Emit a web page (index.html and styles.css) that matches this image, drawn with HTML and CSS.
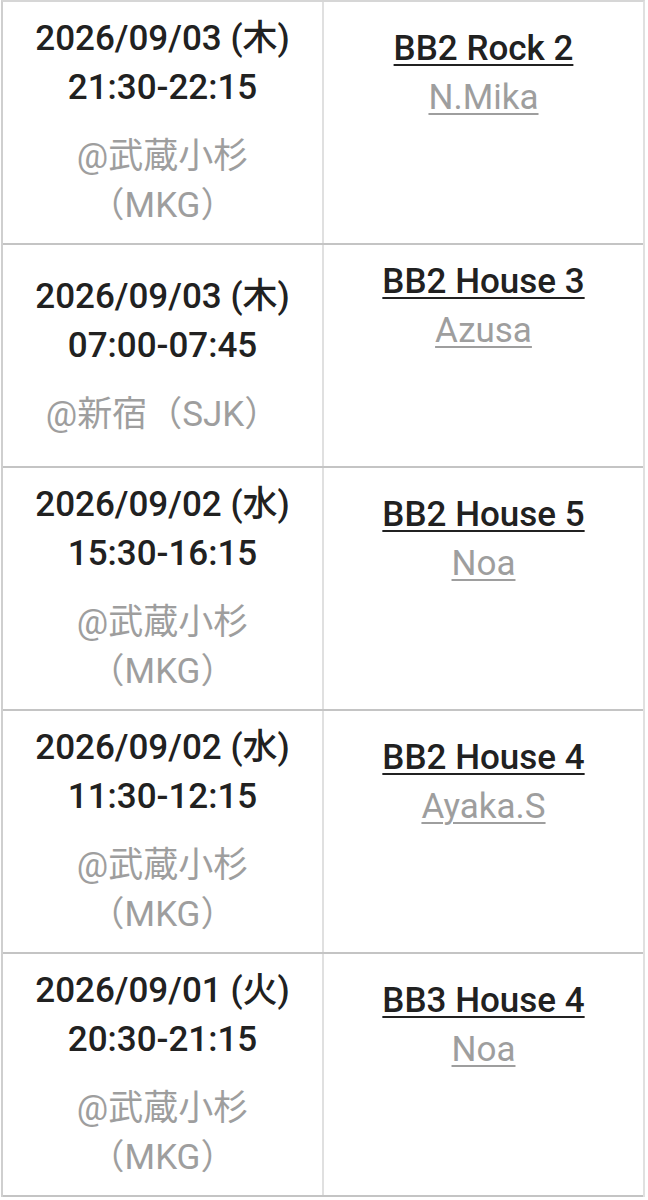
FILE: index.html
```html
<!DOCTYPE html>
<html lang="ja">
<head>
<meta charset="utf-8">
<title>Schedule</title>
<link rel="stylesheet" href="styles.css">
</head>
<body>
<div class="schedule">
  <div class="row">
    <div class="when">
      <div class="datetime">2026/09/03 (木)<br>21:30-22:15</div>
      <div class="place">@武蔵小杉（MKG）</div>
    </div>
    <div class="what">
      <div class="lesson">
        <a class="title" href="#">BB2 Rock 2</a>
        <a class="instructor" href="#">N.Mika</a>
      </div>
    </div>
  </div>
  <div class="row">
    <div class="when">
      <div class="datetime">2026/09/03 (木)<br>07:00-07:45</div>
      <div class="place">@新宿（SJK）</div>
    </div>
    <div class="what">
      <div class="lesson">
        <a class="title" href="#">BB2 House 3</a>
        <a class="instructor" href="#">Azusa</a>
      </div>
    </div>
  </div>
  <div class="row">
    <div class="when">
      <div class="datetime">2026/09/02 (水)<br>15:30-16:15</div>
      <div class="place">@武蔵小杉（MKG）</div>
    </div>
    <div class="what">
      <div class="lesson">
        <a class="title" href="#">BB2 House 5</a>
        <a class="instructor" href="#">Noa</a>
      </div>
    </div>
  </div>
  <div class="row">
    <div class="when">
      <div class="datetime">2026/09/02 (水)<br>11:30-12:15</div>
      <div class="place">@武蔵小杉（MKG）</div>
    </div>
    <div class="what">
      <div class="lesson">
        <a class="title" href="#">BB2 House 4</a>
        <a class="instructor" href="#">Ayaka.S</a>
      </div>
    </div>
  </div>
  <div class="row">
    <div class="when">
      <div class="datetime">2026/09/01 (火)<br>20:30-21:15</div>
      <div class="place">@武蔵小杉（MKG）</div>
    </div>
    <div class="what">
      <div class="lesson">
        <a class="title" href="#">BB3 House 4</a>
        <a class="instructor" href="#">Noa</a>
      </div>
    </div>
  </div>
</div>
</body>
</html>
```

FILE: styles.css
```css
html, body {
  margin: 0;
  padding: 0;
  background: #ffffff;
}

body {
  font-family: Roboto, "Noto Sans CJK JP", sans-serif;
  font-size: 35px;
  line-height: 49px;
}

.schedule {
  box-sizing: border-box;
  width: 644px;
  margin-left: 1px;
  border-top: 2px solid #d6d6d6;
  border-left: 2px solid #cfcfcf;
  border-right: 2px solid #e0e0e0;
}

.row {
  display: grid;
  grid-template-columns: 321px 1fr;
  border-bottom: 2px solid #c4c4c4;
}

.when,
.what {
  display: flex;
  flex-direction: column;
  justify-content: center;
  text-align: center;
  padding: 12px 0 13px;
}

.when {
  border-right: 2px solid #e0e0e0;
}

.datetime {
  color: #212121;
  font-weight: 500;
}

.place {
  color: #9e9e9e;
  margin-top: 20px;
  padding: 0 16px;
}

.lesson {
  display: flex;
  flex-direction: column;
  align-items: center;
  min-height: 196px;
}

.title {
  color: #212121;
  font-weight: 500;
  text-decoration: underline;
  text-decoration-thickness: 2px;
  text-underline-offset: 4px;
}

.instructor {
  color: #9e9e9e;
  text-decoration: underline;
  text-decoration-thickness: 2px;
  text-underline-offset: 4px;
}
```
